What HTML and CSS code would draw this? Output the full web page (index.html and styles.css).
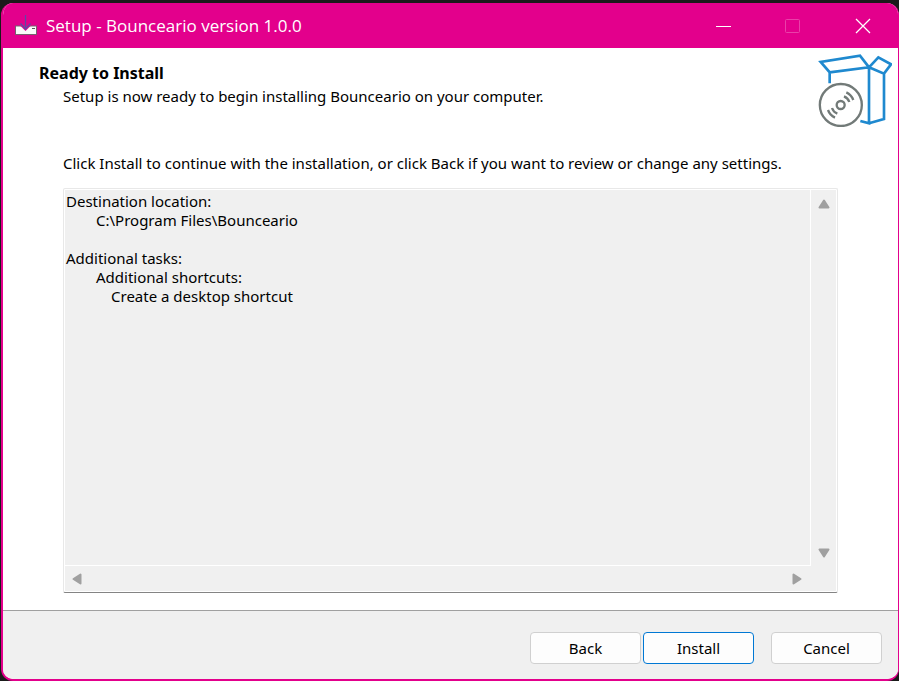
FILE: index.html
```html
<!DOCTYPE html>
<html lang="en">
<head>
<meta charset="utf-8">
<title>Setup - Bounceario version 1.0.0</title>
<link rel="stylesheet" href="styles.css">
</head>
<body>
<div class="window">
  <header class="titlebar">
    <svg class="app-icon" viewBox="0 0 22 22" aria-hidden="true">
      <path d="M0 10.500h22V20H0z" fill="#77606f"/>
      <path d="M1 11.500h20V19H1z" fill="#fafafa"/>
      <path d="M5 10.500l5.500 5.500 5.500-5.500z" fill="#e3008c"/>
      <path d="M17 13.500h3" stroke="#555" fill="none"/>
      <path d="M10.500 0v14M5.500 8.500l5 5.500 5-5.500" stroke="#5a4aa8" stroke-width="1.200" fill="none"/>
    </svg>
    <h1 class="title">Setup - Bounceario version 1.0.0</h1>
    <div class="controls">
      <button class="control" type="button" aria-label="Minimize"><svg viewBox="0 0 16 16"><path d="M1 8.500h15"/></svg></button>
      <button class="control" type="button" aria-label="Maximize" disabled><svg viewBox="0 0 16 16"><rect x="0.500" y="1.500" width="14" height="13" rx="1"/></svg></button>
      <button class="control" type="button" aria-label="Close"><svg viewBox="0 0 16 16"><path d="M1 1l14 14M15 1L1 15" stroke-width="1.300"/></svg></button>
    </div>
  </header>
  <main class="page">
    <div class="intro">
      <div class="heading">
        <h2>Ready to Install</h2>
        <p>Setup is now ready to begin installing Bounceario on your computer.</p>
      </div>
      <svg class="box-icon" viewBox="39 24 222 222" fill="none" stroke-width="8" aria-hidden="true">
        <g stroke="#1f89cf">
          <path d="M74 115V82L47 51 165 32 192 67 74 82M192 67V235L166 228M192 67L220 37 258 58 237 86 192 67M237 86V222L192 235"/>
        </g>
        <g stroke="#727a78" stroke-width="7">
          <circle cx="107.500" cy="180" r="63"/>
          <circle cx="107" cy="180" r="12"/>
          <path d="M117 154a28 28 0 0 1 16 17M124 142a41 41 0 0 1 21 23M97 206a28 28 0 0 1-16-17M90 218a41 41 0 0 1-21-23"/>
        </g>
      </svg>
    </div>
    <label class="prompt" for="summary">Click Install to continue with the installation, or click Back if you want to review or change any settings.</label>
    <div class="memo">
      <textarea id="summary" readonly wrap="off">Destination location:
		C:\Program Files\Bounceario

Additional tasks:
		Additional shortcuts:
			Create a desktop shortcut</textarea>
      <div class="scroll vertical">
        <button type="button" aria-label="Scroll up"><svg viewBox="0 0 12 10"><path d="M6 1.500L10.500 8.500h-9z"/></svg></button>
        <button type="button" aria-label="Scroll down"><svg viewBox="0 0 12 10"><path d="M6 8.500L1.500 1.500h9z"/></svg></button>
      </div>
      <div class="scroll horizontal">
        <button type="button" aria-label="Scroll left"><svg viewBox="0 0 10 12"><path d="M1.500 6L8.500 1.500v9z"/></svg></button>
        <button type="button" aria-label="Scroll right"><svg viewBox="0 0 10 12"><path d="M8.500 6L1.500 1.500v9z"/></svg></button>
      </div>
    </div>
  </main>
  <footer class="actions">
    <button class="action" type="button">Back</button>
    <button class="action primary" type="button">Install</button>
    <button class="action cancel" type="button">Cancel</button>
  </footer>
</div>
</body>
</html>
```
FILE: styles.css
```css
* {
  box-sizing: border-box;
}

body {
  margin: 0;
  padding: 3px 0 0 1px;
  height: 100vh;
  background: #1a1a1a;
  color: #000;
  font: 15px/19px "Noto Sans", sans-serif;
}

h1, h2, p {
  margin: 0;
}

button, textarea {
  font: inherit;
  color: inherit;
}

.window {
  display: flex;
  flex-direction: column;
  height: 100%;
  overflow: hidden;
  border: solid #e3008c;
  border-width: 0 1px 2px 2px;
  border-radius: 12px;
  background: #fff;
}

.titlebar {
  display: flex;
  flex: none;
  align-items: center;
  height: 45px;
  padding-left: 12px;
  background: #e3008c;
  color: #fff;
}

.app-icon {
  width: 22px;
  height: 22px;
  margin-right: 9px;
}

.title {
  flex: 1;
  font: 17px/24px "Open Sans", sans-serif;
}

.controls {
  display: flex;
  align-self: stretch;
}

.control {
  display: grid;
  place-items: center;
  width: 70px;
  padding: 0;
  border: 0;
  background: none;
}

.control svg {
  width: 16px;
  height: 16px;
  fill: none;
  stroke: #fff;
}

.control:disabled svg {
  opacity: 0.25;
}

.page {
  display: flex;
  flex: 1;
  flex-direction: column;
  min-height: 0;
  padding-bottom: 17px;
}

.intro {
  display: flex;
  justify-content: space-between;
  padding: 5px 6px 0 36px;
}

.heading {
  padding-top: 11px;
}

.heading h2 {
  font-size: 16px;
  line-height: 19px;
}

.heading p {
  padding: 4px 0 0 24px;
}

.box-icon {
  flex: none;
  width: 74px;
  height: 74px;
}

.prompt {
  padding: 27px 60px 15px;
}

.memo {
  display: grid;
  flex: 1;
  grid-template: 1fr 26px / 1fr 26px;
  min-height: 0;
  margin: 0 60px;
  border: 1px solid #e8e8e8;
  border-bottom-color: #848484;
  border-radius: 2px;
  background: #f0f0f0;
  box-shadow: inset 0 0 0 1px #fff;
}

.memo textarea {
  min-width: 0;
  margin: 1px 0 0 1px;
  padding: 2px 0 0 1px;
  overflow: hidden;
  border: solid #fff;
  border-width: 0 1px 1px 0;
  outline: 0;
  background: none;
  resize: none;
  tab-size: 15px;
}

.scroll {
  display: flex;
  justify-content: space-between;
}

.vertical {
  flex-direction: column;
  align-items: center;
  padding: 10px 1px 8px 0;
}

.horizontal {
  align-items: center;
  padding: 0 9px 1px 8px;
}

.scroll button {
  display: flex;
  padding: 0;
  border: 0;
  background: none;
}

.scroll svg {
  width: 12px;
  height: 10px;
  fill: #a0a0a0;
  stroke: #a0a0a0;
  stroke-width: 2;
  stroke-linejoin: round;
}

.horizontal svg {
  width: 10px;
  height: 12px;
}

.actions {
  display: flex;
  flex: none;
  justify-content: flex-end;
  gap: 2px;
  padding: 21px 16px 15px;
  border-top: 1px solid #a0a0a0;
  background: #f0f0f0;
}

.action {
  width: 111px;
  height: 32px;
  border: 1px solid #d0d0d0;
  border-radius: 4px;
  background: #fdfdfd;
}

.primary {
  border-color: #0078d4;
}

.cancel {
  margin-left: 15px;
}
```
